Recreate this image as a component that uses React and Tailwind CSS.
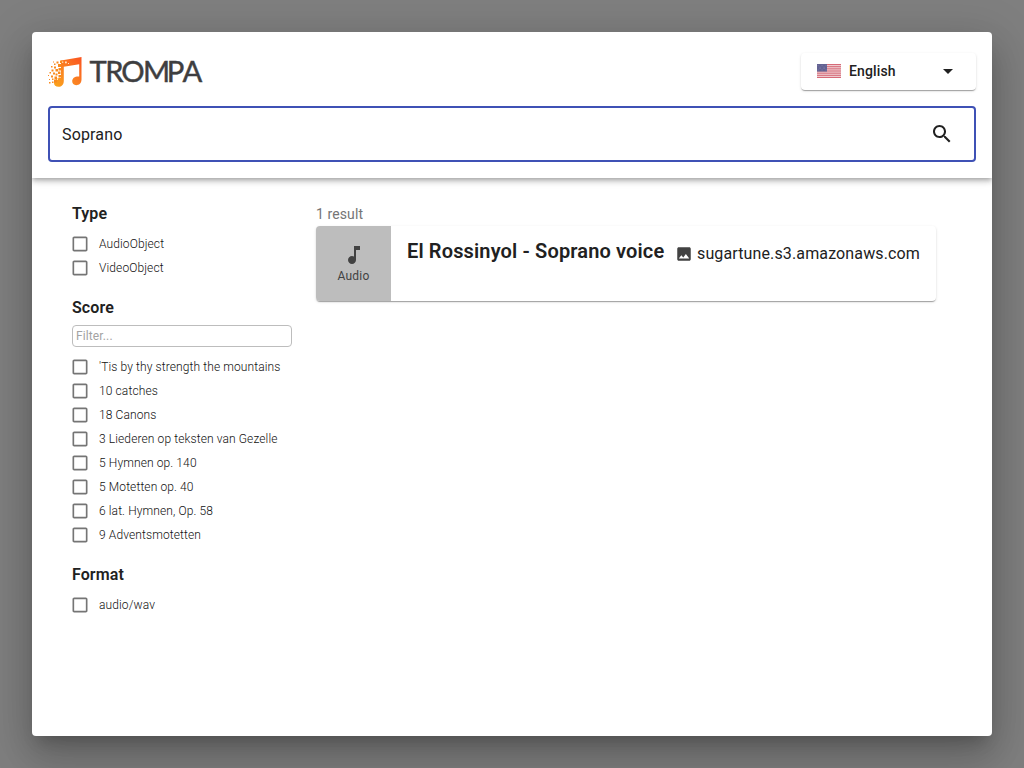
import React from "react";

const TYPES = ["AudioObject", "VideoObject"];
const SCORES = [
  "'Tis by thy strength the mountains",
  "10 catches",
  "18 Canons",
  "3 Liederen op teksten van Gezelle",
  "5 Hymnen op. 140",
  "5 Motetten op. 40",
  "6 lat. Hymnen, Op. 58",
  "9 Adventsmotetten",
];
const FORMATS = ["audio/wav"];

// Loose squares breaking away from the left of the note: x, y, size
const BITS = [
  [12, 3.5, 2.5], [8.5, 4.5, 2], [6, 6.5, 1.5], [10, 7, 3], [5, 4.5, 1],
  [3, 9, 1.5], [6, 9.5, 2], [3.5, 12.5, 2], [7.5, 12, 2.5], [10.5, 11, 2.5], [10, 14.5, 2.5],
  [1.5, 15, 1.5], [5, 15.5, 2], [7.5, 16.5, 2], [10.5, 18, 2.5], [0, 18, 1], [3, 18.5, 2],
  [6.5, 19.5, 2.5], [4, 21.5, 1.5], [1, 22, 1], [6, 22.5, 3], [1, 25, 1.5],
  [4, 24.5, 1.5],
];

function Logo() {
  return (
    <div className="flex">
      <svg width="36" height="32" viewBox="0 0 36 32" className="mt-0.5 shrink-0">
        <defs>
          <linearGradient id="note" x1="0" y1="1" x2="1" y2="0">
            <stop offset="0" stopColor="#fba51b" />
            <stop offset="0.45" stopColor="#fa8423" />
            <stop offset="1" stopColor="#fb5320" />
          </linearGradient>
        </defs>
        <path
          fill="url(#note)"
          d="M13 3.6 33.5 0V22.5c0 3.8-2.5 5.7-5.3 5.7-2.5 0-4-1.7-4-3.9 0-3 2.5-5.1 7-4.8V7.2L15.8 9.8v14c0 4-2.4 6-5.2 6-3 0-4.6-1.7-4.6-3.9 0-2.8 3-4.9 7-4.9V9z"
        />
        <g fill="#f98a1f">
          {BITS.map(([x, y, s], i) => (
            <rect key={i} x={x} y={y} width={s} height={s} />
          ))}
        </g>
        <g fill="#ffe3c2">
          <rect x="14" y="4.5" width="1.3" height="1.3" />
          <rect x="17" y="4.5" width="1.8" height="1.8" />
          <rect x="20" y="6" width="1" height="1" />
          <rect x="9" y="22" width="1" height="1" />
        </g>
      </svg>
      <svg width="126" height="42" viewBox="0 0 126 42" className="-mt-1 ml-0.5">
        <text
          x="3.5 19.3 35.3 57 80.8 96.6"
          y="31.2"
          strokeWidth="0.45"
          className="fill-[#3e3e40] stroke-[#3e3e40] font-['Lato',sans-serif] text-[29.2px]"
        >
          TROMPA
        </text>
      </svg>
    </div>
  );
}

function Flag() {
  return (
    <svg width="24" height="14" viewBox="0 0 24 14" className="opacity-80">
      <rect width="24" height="14" fill="#eec9cd" />
      {[0, 1, 2, 3, 4, 5, 6].map((i) => (
        <rect key={i} y={(i * 28) / 13} width="24" height={14 / 13} fill="#cc4657" />
      ))}
      <rect width="10" height="7.54" fill="#3c3b78" />
      <g fill="#8382b0">
        {[1, 3, 5, 7, 9].map((x, i) => (
          <rect key={x} x={x - 0.3} y={i % 2 ? 2.8 : 1.4} width="0.7" height="0.7" />
        ))}
        {[1, 3, 5, 7, 9].map((x, i) => (
          <rect key={x} x={x - 0.3} y={i % 2 ? 4.2 : 5.6} width="0.7" height="0.7" />
        ))}
      </g>
    </svg>
  );
}

function Icon({ d, className }) {
  return (
    <svg viewBox="0 0 24 24" className={className} fill="currentColor">
      <path d={d} />
    </svg>
  );
}

function Facet({ title, items, filter }) {
  return (
    <section>
      <h2 className="text-base leading-6 font-semibold tracking-[0.09px] text-[#212121]">{title}</h2>
      {filter && (
        <input
          placeholder="Filter..."
          className="mt-[5px] block h-[22px] w-[220px] rounded border border-[#bdbdbd] px-[3px] text-xs tracking-[0.12px] text-[#212121] placeholder:text-[#a3a3a3]"
        />
      )}
      <ul className={filter ? "mt-2" : "mt-1.5"}>
        {items.map((item) => (
          <li key={item} className="flex h-6 items-center">
            <Icon
              className="-ml-0.5 size-5 text-[#757575]"
              d="M19 5v14H5V5h14m0-2H5c-1.1 0-2 .9-2 2v14c0 1.1.9 2 2 2h14c1.1 0 2-.9 2-2V5c0-1.1-.9-2-2-2z"
            />
            <span className="ml-[9px] text-xs font-light tracking-[0.11px] whitespace-nowrap text-[#111]">{item}</span>
          </li>
        ))}
      </ul>
    </section>
  );
}

const CARD_SHADOW =
  "shadow-[0_2px_1px_-1px_rgba(0,0,0,0.2),0_1px_1px_0_rgba(0,0,0,0.14),0_1px_3px_0_rgba(0,0,0,0.12)]";

export default function App() {
  return (
    <div className="flex h-screen w-screen bg-[#7f7f7f] p-8 font-['Roboto',sans-serif] text-[#212121]">
      <div className="flex w-full flex-col overflow-hidden rounded bg-white shadow-[0_11px_15px_-7px_rgba(0,0,0,0.2),0_24px_38px_3px_rgba(0,0,0,0.14),0_9px_46px_8px_rgba(0,0,0,0.12)]">
        <header className="h-[146px] shrink-0 px-4 pt-[21px] shadow-[0_2px_4px_-1px_rgba(0,0,0,0.2),0_4px_5px_0_rgba(0,0,0,0.14),0_1px_10px_0_rgba(0,0,0,0.12)]">
          <div className="flex h-[37px] items-start justify-between">
            <div className="pt-0.5">
              <Logo />
            </div>
            <button className={`flex h-[37px] w-[175px] items-center rounded pb-px pl-4 ${CARD_SHADOW}`}>
              <Flag />
              <span className="ml-2 text-sm font-medium tracking-[0.13px]">English</span>
              <Icon className="ml-auto mr-4 size-6" d="M7 10l5 5 5-5z" />
            </button>
          </div>
          <div className="mt-4 flex h-14 items-center rounded border-2 border-[#3f51b5] pr-5 pl-3">
            <input className="w-full min-w-0 pt-0.5 text-base tracking-[0.15px] outline-none" defaultValue="Soprano" />
            <Icon
              className="size-6 shrink-0"
              d="M15.5 14h-.79l-.28-.27C15.41 12.59 16 11.11 16 9.5 16 5.91 13.09 3 9.5 3S3 5.91 3 9.5 5.91 16 9.5 16c1.61 0 3.09-.59 4.23-1.57l.27.28v.79l5 4.99L20.49 19l-4.99-5zm-6 0C7.01 14 5 11.99 5 9.5S7.01 5 9.5 5 14 7.01 14 9.5 11.99 14 9.5 14z"
            />
          </div>
        </header>
        <main className="flex grow gap-6 px-10 pt-6">
          <aside className="flex w-[220px] shrink-0 flex-col gap-4">
            <Facet title="Type" items={TYPES} />
            <Facet title="Score" items={SCORES} filter />
            <Facet title="Format" items={FORMATS} />
          </aside>
          <div className="w-[620px] pt-0.5">
            <p className="text-sm leading-5 tracking-[0.1px] text-[#757575]">1 result</p>
            <article className={`mt-0.5 flex h-[75px] overflow-hidden rounded ${CARD_SHADOW}`}>
              <div className="flex w-[75px] shrink-0 flex-col items-center bg-[#bdbdbd] pt-[17px] text-[#424242]">
                <Icon
                  className="size-6"
                  d="M12 3v10.55c-.59-.34-1.27-.55-2-.55-2.21 0-4 1.79-4 4s1.79 4 4 4 4-1.79 4-4V7h4V3h-6z"
                />
                <span className="text-xs leading-[18px] tracking-[0.2px]">Audio</span>
              </div>
              <div className="flex items-start pt-[9px] pl-4">
                <h3 className="w-[257px] text-xl leading-8 font-semibold tracking-[0.14px] whitespace-nowrap">El Rossinyol - Soprano voice</h3>
                <Icon
                  className="mt-[10px] ml-[11px] size-[18px] text-[#424242]"
                  d="M21 19V5c0-1.1-.9-2-2-2H5c-1.1 0-2 .9-2 2v14c0 1.1.9 2 2 2h14c1.1 0 2-.9 2-2zM8.5 13.5l2.5 3.01L14.5 12l4.5 6H5l3.5-4.5z"
                />
                <span className="ml-1 pt-[7px] text-base leading-6 tracking-[0.13px]">sugartune.s3.amazonaws.com</span>
              </div>
            </article>
          </div>
        </main>
      </div>
    </div>
  );
}
